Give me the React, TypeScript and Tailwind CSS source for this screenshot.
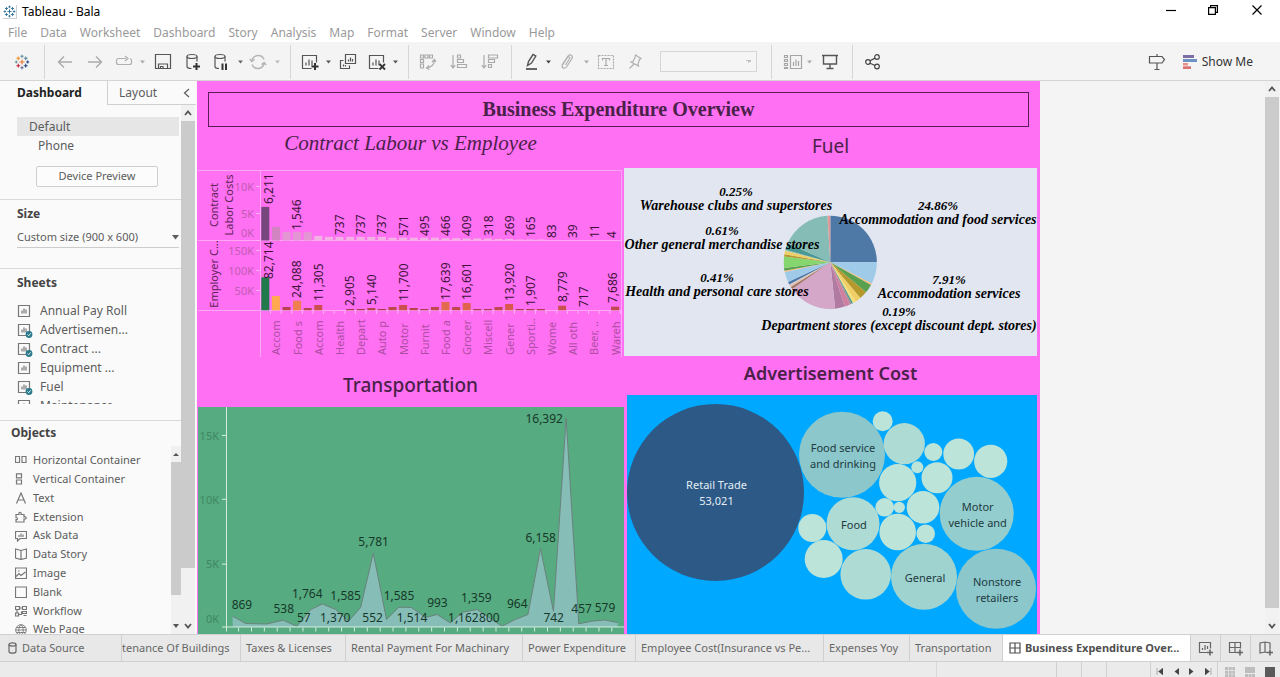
import React from "react";

const SANS = "font-['Noto_Sans','Open_Sans',sans-serif]";

/* ---------- small shared pieces ---------- */

function Icon({ children, w = 18, h = 18, className = "" }: { children: React.ReactNode; w?: number; h?: number; className?: string }) {
  return (
    <svg width={w} height={h} viewBox={`0 0 ${w} ${h}`} fill="none" stroke="currentColor" strokeWidth="1.2" aria-hidden="true" className={`shrink-0 ${className}`}>
      {children}
    </svg>
  );
}

function Tool({ label, className, children }: { label: string; className: string; children: React.ReactNode }) {
  return (
    <button type="button" aria-label={label} className={`flex h-8 shrink-0 items-center justify-center ${className}`}>
      {children}
    </button>
  );
}

function Caret({ label, className = "w-2 text-[#666]" }: { label: string; className?: string }) {
  return (
    <Tool label={label} className={className}>
      <Icon w={5} h={4}>
        <path d="M0 .5h5L2.500 3.500z" fill="currentColor" stroke="none" />
      </Icon>
    </Tool>
  );
}

function Divider({ className }: { className: string }) {
  return <span className={`h-[34px] w-px shrink-0 bg-[#d6d6d6] ${className}`} />;
}

const CROSSES: [number, number, number, string][] = [
  [8, 8, 2.6, "#e8762d"], [8, 2.3, 1.5, "#5b879b"], [8, 13.7, 1.5, "#5b6591"], [2.300, 8, 1.5, "#7099a6"], [13.7, 8, 1.5, "#1f447e"],
  [4.300, 4.300, 1.9, "#eb9129"], [11.700, 4.300, 1.9, "#59879b"], [4.300, 11.700, 1.9, "#c72035"], [11.700, 11.700, 1.9, "#1f447e"],
];

function TableauMark({ size, mono = false }: { size: number; mono?: boolean }) {
  return (
    <svg width={size} height={size} viewBox="0 0 16 16" aria-hidden="true" className="shrink-0">
      {CROSSES.map(([x, y, r, c], i) => (
        <path key={i} d={`M${x - r} ${y}h${2 * r}M${x} ${y - r}v${2 * r}`} stroke={mono ? "#2f7096" : c} strokeWidth="1.1" />
      ))}
    </svg>
  );
}

function ChartGlyph({ extra }: { extra?: React.ReactNode }) {
  return (
    <Icon>
      <path d="M10.500 15.500H1.500v-13h14v7M5 12.500v-3M8 12.500V6.500M11 12.500v-5" />
      {extra}
    </Icon>
  );
}

/* ---------- header ---------- */

const MENUS = ["File", "Data", "Worksheet", "Dashboard", "Story", "Analysis", "Map", "Format", "Server", "Window", "Help"];

function TitleBar() {
  return (
    <div className="flex h-6 shrink-0 items-center bg-white pl-[3px]">
      <span className="flex size-[14px] items-center justify-center border-r border-b border-[#c8d0d4]">
        <TableauMark size={13} mono />
      </span>
      <span className="ml-[5px] text-[12px] text-black">Tableau - Bala</span>
      <div className="ml-auto flex h-full items-start text-black">
        <button type="button" aria-label="Minimize" className="flex h-5 w-[43px] items-center justify-center">
          <Icon w={10} h={10}><path d="M0 5.500h10" /></Icon>
        </button>
        <button type="button" aria-label="Restore" className="flex h-5 w-[42px] items-center justify-center">
          <Icon w={10} h={10}><path d="M.6 2.600h6.800v6.800H.6zM2.600 2.600V.6h6.800v6.800H7.400" /></Icon>
        </button>
        <button type="button" aria-label="Close" className="flex h-5 w-[46px] items-center justify-center">
          <Icon w={10} h={10}><path d="M.5.5l9 9M9.500.5l-9 9" /></Icon>
        </button>
      </div>
    </div>
  );
}

function MenuBar() {
  return (
    <nav className="flex h-[18px] shrink-0 items-center gap-[13px] bg-white pl-2 text-[12px] text-[#999]">
      {MENUS.map((m) => (
        <button key={m} type="button">{m}</button>
      ))}
    </nav>
  );
}

function Toolbar() {
  return (
    <div className="flex h-[39px] shrink-0 items-center border-b border-[#d4d4d4] bg-[#f4f4f4] pt-px text-[#555]">
      <Tool label="Start page" className="w-11"><TableauMark size={16} /></Tool>
      <Divider className="mr-[5px]" />
      <Tool label="Undo" className="w-[30px] text-[#aaa]"><Icon><path d="M16 9H2.500M8 3.500L2.500 9 8 14.500" strokeWidth="1.4" /></Icon></Tool>
      <Tool label="Redo" className="w-[30px] text-[#aaa]"><Icon><path d="M2 9h13.500M10 3.500L15.500 9 10 14.500" strokeWidth="1.4" /></Icon></Tool>
      <Tool label="Replay" className="w-7 text-[#b0b0b0]">
        <Icon><path d="M11 5.500H3.500a2 2 0 0 0-2 2v2a2 2 0 0 0 2 2h11a2 2 0 0 0 2-2v-2a2 2 0 0 0-1.500-2M10 3l3 2.500L10 8" /></Icon>
      </Tool>
      <Caret label="Replay options" className="w-2 text-[#aaa]" />
      <Tool label="Save" className="w-[34px]">
        <Icon><path d="M1.500 1.500h15v14h-15zM4.500 15.500v-4.500h9v4.500M6.500 15.500v-2h2.500v2" /></Icon>
      </Tool>
      <Tool label="New data source" className="w-[26px]">
        <Icon>
          <ellipse cx="8" cy="3.500" rx="5" ry="2" />
          <path d="M3 3.500v10c0 1.200 2 2 4.500 2M13 3.500v5" />
          <path d="M12.500 10v7M9 13.500h7" strokeWidth="2" stroke="#333" />
        </Icon>
      </Tool>
      <Tool label="Pause auto updates" className="w-[30px]">
        <Icon>
          <ellipse cx="8" cy="3.500" rx="5" ry="2" />
          <path d="M3 3.500v10c0 1.200 2 2 4 2M13 3.500v5" />
          <path d="M10.500 10.500v6.500M14 10.500v6.500" strokeWidth="2" stroke="#333" />
        </Icon>
      </Tool>
      <Caret label="Auto update options" />
      <Tool label="Run update" className="w-7 text-[#b5b5b5]">
        <Icon><path d="M3 7.500a6.300 6.300 0 0 1 12-1M15 10.500a6.300 6.300 0 0 1-12 1M.8 6l2 2.500L5.500 6.500M17.200 12l-2-2.500-2.700 2" strokeWidth="1.400" /></Icon>
      </Tool>
      <Caret label="Run update options" className="w-[10px] text-[#bbb]" />
      <Divider className="mr-[5px] ml-2" />
      <Tool label="New worksheet" className="w-[27px]">
        <ChartGlyph extra={<path d="M14 10v7M10.500 13.500h7" strokeWidth="2" stroke="#333" />} />
      </Tool>
      <Caret label="New worksheet options" className="w-[10px] text-[#555]" />
      <Tool label="Duplicate" className="w-[29px]">
        <Icon><path d="M6.500 1.500h10v9h-10zM9.500 8.500v-2M11.500 8.500v-4M13.500 8.500V6M4.500 7.500h-3v8h9v-3M4.500 13.500v-2M6.500 13.500V12" /></Icon>
      </Tool>
      <Tool label="Clear sheet" className="w-[29px]">
        <ChartGlyph extra={<path d="M11.500 11l5.500 5.500M17 11l-5.500 5.500" strokeWidth="1.800" stroke="#333" />} />
      </Tool>
      <Caret label="Clear options" className="w-[9px] text-[#555]" />
      <Divider className="mr-1 ml-2" />
      <Tool label="Swap rows and columns" className="w-[30px] text-[#aaa]">
        <Icon><path d="M1.500 2h3v3h-3zM6 2h3v3H6zM10.500 2h3v3h-3zM1.500 6.500h3v3h-3zM1.500 11h3v4h-3zM15.500 7c0 5-3 7-8 8M13 9l2.500-2.500L17 9M10 12.500L7.500 15l3 1.500" /></Icon>
      </Tool>
      <Tool label="Sort ascending" className="w-8 text-[#aaa]">
        <Icon><path d="M3 2v12.500M.8 12L3 15l2.200-3M7.500 2h3v3h-3zM7.500 6.500h6v3h-6zM7.500 11.500h9v3h-9z" /></Icon>
      </Tool>
      <Tool label="Sort descending" className="w-[30px] text-[#aaa]">
        <Icon><path d="M3 2v12.500M.8 12L3 15l2.200-3M7.500 2h9v3h-9zM7.500 6.500h6v3h-6zM7.500 11.500h3v3h-3z" /></Icon>
      </Tool>
      <Divider className="mr-2 ml-[6px]" />
      <Tool label="Highlight" className="w-6">
        <Icon>
          <path d="M4.500 12.500l1-4L10 1.500l2.800 1.600-4.300 7z" strokeWidth="1.400" />
          <path d="M3 16h11" strokeWidth="1.800" />
        </Icon>
      </Tool>
      <Caret label="Highlight options" className="w-2 text-[#444]" />
      <Tool label="Group members" className="w-[30px] text-[#b0b0b0]">
        <Icon><path d="M4 12l6-9c2-2.500 5.500-.5 4 2.500l-5.500 8.500c-2 2.500-5.500.5-4-2l5-7.500c1-1.500 3-.2 2.200 1L7.500 12" /></Icon>
      </Tool>
      <Caret label="Group options" className="w-2 text-[#aaa]" />
      <Tool label="Show mark labels" className="w-8 text-[#aaa]">
        <Icon>
          <path d="M1.500 2.500h15v13h-15z" strokeDasharray="2 1" />
          <path d="M5.500 7.500v-2h7v2M9 5.500v7M7 12.500h4" />
        </Icon>
      </Tool>
      <Tool label="Fix axes" className="w-[26px] text-[#b0b0b0]">
        <Icon><path d="M9.500 2l5.500 3.500-1.500 1-1.500 4.500.5 2L5 9l2-.5L9 4.500zM8 11l-4.500 4.500" /></Icon>
      </Tool>
      <select aria-label="Fit" className="mr-[14px] ml-3 h-[21px] w-[97px] shrink-0 appearance-none border border-[#d5d5d5] bg-[#f5f5f5] bg-[linear-gradient(45deg,transparent_50%,#c4c4c4_50%),linear-gradient(-45deg,transparent_50%,#c4c4c4_50%)] bg-[position:85px_8px,88px_8px] bg-[size:3px_3px] bg-no-repeat" defaultValue="">
        <option value=""></option>
      </select>
      <Divider className="mr-2" />
      <Tool label="Show or hide cards" className="w-[25px] text-[#a5a5a5]">
        <Icon w={20}><path d="M7.500 2.500h11v13h-11zM10.500 13V9M13 13V6.500M15.500 13V8M1.500 2.500h3v2h-3zM1.500 6.500h3v2h-3zM1.500 10.500h3v2h-3zM1.500 14.500h3v1h-3z" /></Icon>
      </Tool>
      <Caret label="Card options" className="w-2 text-[#aaa]" />
      <Tool label="Presentation mode" className="w-[33px]">
        <Icon><path d="M1 2.500h16M2.500 2.500v8.500h13V2.500M9 11v4.500M5.500 15.500h7" strokeWidth="1.400" /></Icon>
      </Tool>
      <Divider className="mr-[6px] ml-[6px]" />
      <Tool label="Share" className="w-7 text-[#444]">
        <Icon>
          <circle cx="4" cy="9" r="2.300" /><circle cx="13" cy="4" r="2.300" /><circle cx="13" cy="13.500" r="2.300" />
          <path d="M6 7.800l5-2.700M6 10.200l5 2.300" />
        </Icon>
      </Tool>
      <div className="ml-auto flex items-center pr-[27px]">
        <Tool label="Tour" className="mr-4 w-5">
          <Icon><path d="M1.500 3.500H14l2.500 3L14 10H1.500zM9 1v2.500M9 10v6.500M6.500 16.500h5" /></Icon>
        </Tool>
        <button type="button" className="flex items-center gap-[5px] text-[12px] text-[#333]">
          <svg width="14" height="14" viewBox="0 0 14 14" aria-hidden="true">
            <path d="M0 0h11v3H0z" fill="#7b6fa6" /><path d="M0 4h14v3H0z" fill="#6d93c4" />
            <path d="M0 8h5v2.500H0z" fill="#e8908a" /><path d="M0 11.300h8V14H0z" fill="#d97272" />
          </svg>
          Show Me
        </button>
      </div>
    </div>
  );
}

/* ---------- scroll bars ---------- */

function Arrow({ up, solid = false }: { up: boolean; solid?: boolean }) {
  return (
    <Icon w={8} h={6} className="text-[#555]">
      {solid ? (
        <path d={up ? "M1 5h6L4 2z" : "M1 1h6L4 5z"} fill="currentColor" stroke="none" />
      ) : (
        <path d={up ? "M1 5l3-3.500L7 5" : "M1 1l3 3.500L7 1"} strokeWidth="1.800" />
      )}
    </Icon>
  );
}

function ScrollBar({ className, thumb, solid }: { className: string; thumb: string; solid?: boolean }) {
  return (
    <div className={`flex shrink-0 flex-col items-center bg-[#f1f1f1] ${className}`} aria-hidden="true">
      <span className="flex h-4 items-center"><Arrow up solid={solid} /></span>
      <div className="flex w-full flex-1 flex-col"><span className={`w-full bg-[#cbcbcb] ${thumb}`} /></div>
      <span className="flex h-4 items-center"><Arrow up={false} solid={solid} /></span>
    </div>
  );
}

/* ---------- sidebar ---------- */

const SHEETS = [
  { name: "Annual Pay Roll", used: false },
  { name: "Advertisemen...", used: true },
  { name: "Contract ...", used: true },
  { name: "Equipment ...", used: false },
  { name: "Fuel", used: true },
  { name: "Maintenance ...", used: false },
];

const OBJECTS: { name: string; icon: React.ReactNode }[] = [
  { name: "Horizontal Container", icon: <path d="M.5 2.500h4v6h-4zM7 2.500h4v6H7z" /> },
  { name: "Vertical Container", icon: <path d="M1.500 .8h5v4h-5zM1.500 7h5v4h-5z" /> },
  { name: "Text", icon: <path d="M1.500 11.500L6 1l4.500 10.500M3 8h6" /> },
  { name: "Extension", icon: <path d="M1 3.500h3c-1-3 3-3 2 0h3v2.500c3-1 3 2.500 0 2v3H1V8.500c2 .5 2-2 0-2z" /> },
  { name: "Ask Data", icon: <path d="M.5 1.500h11v7H5l-2.500 2.500V8.500h-2zM4 7V5M6 7V3.500M8 7V4.500" /> },
  { name: "Data Story", icon: <path d="M6 2.500L.5 1v9L6 11.500 11.500 10V1zM6 2.500v9" /> },
  { name: "Image", icon: <path d="M.5 1h11v10.500H.5zM1 9.500l3-3 2 2 4.500-3.500M3 4h1.500" /> },
  { name: "Blank", icon: <path d="M.5 1h11v10.500H.5z" /> },
  { name: "Workflow", icon: <path d="M.5 1.500h4v3h-4zM7.500 1.500h4v3h-4zM.5 8h3v3h-3zM7.500 6.500h4v2h-4zM4.500 3h3M3.500 9.500h3v-3M2 4.500V8M8.500 10.500h3" /> },
  { name: "Web Page", icon: <path d="M6 .7a5.300 5.300 0 1 0 0 10.600A5.300 5.300 0 0 0 6 .7zM6 .7c-3 3-3 7.600 0 10.600 3-3 3-7.600 0-10.600zM.7 6h10.600M1.500 3.500h9M1.500 8.500h9" strokeWidth=".9" /> },
];

function SheetIcon({ used }: { used: boolean }) {
  return (
    <Icon w={16} h={16} className="text-[#777]">
      <path d="M1.500 2.500h11v11h-11z" />
      <path d="M5 10.500v-3M7 10.500V5.500M9 10.500V6.500" />
      {used && (
        <>
          <circle cx="12" cy="12.500" r="3.400" fill="#2b7a8c" stroke="none" />
          <path d="M10.500 12.500l1.200 1.200 2-2.400" stroke="#fff" strokeWidth=".9" />
        </>
      )}
    </Icon>
  );
}

function Sidebar() {
  return (
    <aside className="flex w-[196px] shrink-0 flex-col bg-[#fafafa] text-[12px] text-[#5c5c5c]">
      <div className="flex h-6 shrink-0">
        <button type="button" className="w-[107px] pl-[17px] text-left font-bold text-[#222]">Dashboard</button>
        <div className="flex flex-1 items-center justify-between border-b border-l border-[#d0d0d0] pr-[6px] pl-[11px]">
          <button type="button">Layout</button>
          <button type="button" aria-label="Collapse pane"><Icon w={7} h={10}><path d="M6 1L1.500 5 6 9" /></Icon></button>
        </div>
      </div>
      <div className="flex min-h-0 flex-1">
        <div className="flex min-w-0 flex-1 flex-col">
          <section className="h-[95px] shrink-0 border-b border-[#d8d8d8] pt-3 pr-[2px] pl-[17px]">
            <button type="button" className="block h-[19px] w-full bg-[#e6e6e6] pl-3 text-left">Default</button>
            <button type="button" className="block h-[19px] pl-[21px]">Phone</button>
            <button type="button" className="mt-[11px] ml-[19px] h-[21px] w-[122px] rounded-[2px] border border-[#cfcfcf] bg-[#fcfcfc] text-[11px]">Device Preview</button>
          </section>
          <section className="h-[69px] shrink-0 border-b border-[#d8d8d8] pt-[5px] pr-[2px] pl-[17px]">
            <h2 className="h-[19px] font-bold text-[#444]">Size</h2>
            <div className="mt-1 flex h-5 items-center border-b border-[#ccc]">
              <select aria-label="Size" className="min-w-0 flex-1 appearance-none bg-transparent text-[11px]">
                <option>Custom size (900 x 600)</option>
              </select>
              <Icon w={7} h={5}><path d="M0 0h7L3.500 4.500z" fill="currentColor" stroke="none" /></Icon>
            </div>
          </section>
          <section className="flex h-[152px] shrink-0 flex-col border-b border-[#d8d8d8] pt-[5px] pl-[17px]">
            <h2 className="h-[19px] font-bold text-[#444]">Sheets</h2>
            <ul className="mt-2 h-[103px] overflow-hidden">
              {SHEETS.map((s) => (
                <li key={s.name} className="flex h-[19px] items-center gap-[7px]">
                  <SheetIcon used={s.used} />
                  {s.name}
                </li>
              ))}
            </ul>
          </section>
          <section className="flex min-h-0 flex-1 flex-col pt-[3px] pl-[11px]">
            <h2 className="h-[22px] shrink-0 font-bold text-[#444]">Objects</h2>
            <div className="flex min-h-0 flex-1 overflow-hidden">
              <ul className="grid h-[193px] flex-1 auto-rows-fr pt-[5px] pl-1 text-[11px]">
                {OBJECTS.map((o) => (
                  <li key={o.name} className="flex items-center gap-[6px]">
                    <Icon w={12} h={12} className="text-[#777]">{o.icon}</Icon>
                    <span className="whitespace-nowrap">{o.name}</span>
                  </li>
                ))}
              </ul>
              <ScrollBar className="w-[10px]" thumb="h-[85%]" solid />
            </div>
          </section>
        </div>
        <ScrollBar className="mr-px w-[14px]" thumb="h-[90%]" />
      </div>
    </aside>
  );
}

/* ---------- contract labour / employer cost bars ---------- */

const PITCH = 10.6;
const barX = (i: number) => 265.3 + i * PITCH;

const LABOUR_HEIGHTS = [33.600, 13.600, 8.600, 8.300, 8.300, 4.600, 3.600, 3.600, 3.600, 3.600, 3.600, 3.600, 2.800, 2.800, 2.800, 2.800, 2.800, 2.300, 2.300, 2, 2, 2, 1.600, 1.600, 1, 1, 1, 0, 0, 0, 0, 0, 0, 0];
const LABOUR_LABELS: [number, number, string][] = [
  [268, 204, "6,211"], [296.7, 230, "1,546"], [339.5, 235, "737"], [360.7, 235, "737"], [381.900, 235, "737"], [403, 236, "571"],
  [424.300, 236, "495"], [445.500, 236, "466"], [466.700, 236, "409"], [488, 236, "318"], [509.100, 236, "269"], [530.300, 237, "165"],
  [551.500, 238, "83"], [572.700, 238, "39"], [594, 238, "11"], [611.500, 238, "4"],
];
const EMPLOYER_BARS: [number, number, string][] = [
  [0, 33, "#217a4b"], [1, 14.300, "#ffa84f"], [2, 3.300, "#b8434f"], [3, 9.600, "#f07f50"], [4, 2.300, "#b8434f"], [5, 5.300, "#cc4f50"],
  [8, 1.300, "#b03a55"], [9, 1.300, "#b03a55"], [10, 2.300, "#b8434f"], [11, 1.300, "#b03a55"], [12, 3.300, "#c04650"], [13, 5.300, "#cc4f50"],
  [14, 2.300, "#b8434f"], [15, 1.300, "#b03a55"], [16, 3.300, "#c04650"], [17, 8.300, "#e46a4d"], [18, 3.300, "#c04650"], [19, 7.300, "#e0634d"],
  [20, 1.300, "#b03a55"], [21, 1.300, "#b03a55"], [22, 3.300, "#c04650"], [23, 6.300, "#d9594e"], [24, 1.300, "#b03a55"], [25, 1.300, "#b03a55"],
  [26, 1.300, "#b03a55"], [28, 4.600, "#cc4f50"], [33, 3.600, "#c04650"],
];
const EMPLOYER_LABELS: [number, number, string][] = [
  [268.500, 279, "82,714"], [296.900, 298, "24,088"], [318.500, 301, "11,305"], [349.500, 306, "2,905"], [371, 305, "5,140"], [403, 301, "11,700"],
  [445.500, 300, "17,639"], [466.700, 300, "16,601"], [509.100, 301, "13,920"], [530.300, 306, "1,907"], [562.500, 302, "8,779"],
  [583, 307, "717"], [612, 303, "7,686"],
];
const CATEGORIES = ["Accom", "Food s", "Accom", "Health", "Depart", "Auto p", "Motor", "Furnit", "Food a", "Grocer", "Miscell", "Gener", "Sporti..", "Wome", "All oth", "Beer, ..", "Wareh"];

function Vertical({ x, y, children, anchor = "start", className = "" }: { x: number; y: number; children: React.ReactNode; anchor?: "start" | "middle"; className?: string }) {
  return (
    <text transform={`translate(${x} ${y}) rotate(-90)`} textAnchor={anchor} dominantBaseline="central" className={className}>
      {children}
    </text>
  );
}

function LabourChart() {
  return (
    <svg viewBox="197 170 427 187" className="block h-auto w-full" role="img" aria-label="Contract labour costs and employer costs by category">
      <path d="M198 170.500H621.500M198 240.500H621.500M198 310.500H621.500M260.500 170V357M621.500 170V357" stroke="#ffa6f5" fill="none" />
      <path d="M256 186.500h4M256 213.500h4M256 240.500h4M256 250.500h4M256 270.500h4M256 290.500h4" stroke="#ffb2f6" />
      {LABOUR_HEIGHTS.map((h, i) => (
        <rect key={i} x={barX(i) - 4} y={240.500 - h} width="8" height={h} fill={i === 0 ? "#75477d" : i === 1 ? "#d184c0" : i < 5 ? "#e397d2" : "#f3b2e4"} />
      ))}
      {EMPLOYER_BARS.map(([i, h, c]) => (
        <rect key={i} x={barX(i) - 4} y={310.300 - h} width="8" height={h} fill={c} />
      ))}
      {LABOUR_HEIGHTS.map((_, i) => (
        <path key={i} d={`M${barX(i) + 5.300} 311v3`} stroke="#ffb2f6" />
      ))}
      <g className="fill-[#c05cb4] text-[11px]" textAnchor="end">
        <text x="254" y="191">10K</text><text x="254" y="218">5K</text><text x="254" y="237">0K</text>
        <text x="254" y="255">150K</text><text x="254" y="275">100K</text><text x="254" y="295">50K</text>
      </g>
      <g className="fill-[#5b2458] text-[11px]">
        <Vertical x={213} y={205} anchor="middle">Contract</Vertical>
        <Vertical x={228} y={205} anchor="middle">Labor Costs</Vertical>
        <Vertical x={213} y={274} anchor="middle">Employer C...</Vertical>
      </g>
      <g className="fill-[#3d133b] text-[12px]">
        {LABOUR_LABELS.concat(EMPLOYER_LABELS).map(([x, y, t], i) => (
          <Vertical key={i} x={x} y={y}>{t}</Vertical>
        ))}
      </g>
      <g className="fill-[#ac4ea3] text-[11px]">
        {CATEGORIES.map((c, i) => (
          <Vertical key={i} x={barX(2 * i + 1)} y={355}>{c}</Vertical>
        ))}
      </g>
    </svg>
  );
}

/* ---------- fuel pie ---------- */

const SLICES: [number, number, string][] = [
  [0, 90, "#4e79a7"], [90, 117, "#a0cbe8"], [117, 119, "#ffbe7d"], [119, 130, "#59a14f"], [130, 140, "#b6992d"], [140, 147, "#f1ce63"],
  [147, 151, "#f3e07b"], [151, 153, "#499894"], [153, 155, "#a08a90"], [155, 162, "#cf7fa0"], [162, 174, "#b07aa1"], [174, 235, "#d4a6c8"], [235, 238, "#9d7660"],
  [238, 240, "#e4b8a8"], [240, 241.500, "#d8cfc8"], [241.500, 245, "#4e79a7"], [245, 258, "#a0cbe8"], [258, 259.500, "#ffbe7d"], [259.500, 263, "#59a14f"], [263, 277, "#86d66f"],
  [277, 280, "#b6992d"], [280, 284, "#f1ce63"], [284, 285.500, "#b7cf9c"], [285.500, 294, "#499894"], [294, 356.500, "#86bcb6"], [356.500, 360, "#e19b98"],
];
const PIE_LABELS: [number, number, string, string][] = [
  [736, 196, "0.25%", "Warehouse clubs and superstores"],
  [938, 210, "24.86%", "Accommodation and food services"],
  [722, 235, "0.61%", "Other general merchandise stores"],
  [717, 282, "0.41%", "Health and personal care stores"],
  [949, 284, "7.91%", "Accommodation services"],
  [899, 316, "0.19%", "Department stores (except discount dept. stores)"],
];

function slicePath(from: number, to: number) {
  const point = (deg: number) => {
    const a = (deg * Math.PI) / 180;
    return `${830.3 + 46.6 * Math.sin(a)} ${262.3 - 46.6 * Math.cos(a)}`;
  };
  return `M830.3 262.3L${point(from)}A46.6 46.6 0 0 1 ${point(to)}Z`;
}

function FuelPie() {
  return (
    <svg viewBox="624 168 413 188" className="block h-auto w-full bg-[#e1e6f1]" role="img" aria-label="Fuel share by category">
      {SLICES.map(([a, b, c]) => (
        <path key={a} d={slicePath(a, b)} fill={c} />
      ))}
      <g textAnchor="middle" className="fill-black font-['Liberation_Serif',serif] font-bold italic">
        {PIE_LABELS.map(([x, y, pct, name]) => (
          <React.Fragment key={name}>
            <text x={x} y={y} className="text-[13px]">{pct}</text>
            <text x={x} y={y + 14} className="text-[14px]">{name}</text>
          </React.Fragment>
        ))}
      </g>
    </svg>
  );
}

/* ---------- transportation area ---------- */

const AREA =
  "232.7,616.7 245.7,624 267,624.5 283.3,620.7 297,626.7 311,610 322.7,604.5 336,610 349,621.5 361,608 373.7,553.5 387,620 399.3,607.7 412,608 426,618 437.7,615 451,623.5 463,612.7 477.7,610 489.5,618 502.7,626.7 516,620 528.7,615 541.3,549 554.3,611.7 567,418 579.7,624.3 592.7,621.7 605.3,620.5 618.7,623";
const AREA_LABELS: [number, number, string][] = [
  [242, 609, "869"], [284, 614, "538"], [307.500, 598, "1,764"], [304, 623, "57"], [335.500, 623, "1,370"], [346, 600, "1,585"],
  [374, 546, "5,781"], [373, 623, "552"], [399.500, 600, "1,585"], [412.500, 623, "1,514"], [438, 607, "993"], [464, 623, "1,162"],
  [477, 602, "1,359"], [490, 623, "800"], [518, 608, "964"], [541.500, 542, "6,158"], [554.500, 623, "742"], [545, 423, "16,392"],
  [582.500, 614, "457"], [606, 613, "579"],
];

function TransportChart() {
  return (
    <svg viewBox="198 407 427 228" className="block h-auto w-full" role="img" aria-label="Transportation cost by category">
      <polygon points={`232.700,627.500 ${AREA} 618.700,627.500`} fill="#86bdb7" />
      <polyline points={AREA} fill="none" stroke="#6a827c" />
      <path d="M226.500 407V632M222 627.500H625M222 435.500h4M222 499.500h4M222 564.500h4" stroke="#d7efe3" fill="none" />
      {Array.from({ length: 30 }, (_, i) => (
        <path key={i} d={`M${238.700 + i * 12.900} 628v4`} stroke="#d7efe3" />
      ))}
      <g textAnchor="end" className="fill-[#3f8763] text-[11px]">
        <text x="219" y="440">15K</text><text x="219" y="504">10K</text><text x="219" y="568">5K</text><text x="219" y="624">0K</text>
      </g>
      <g textAnchor="middle" className="fill-[#16382a] text-[12px]">
        {AREA_LABELS.map(([x, y, t], i) => (
          <text key={i} x={x} y={y}>{t}</text>
        ))}
      </g>
    </svg>
  );
}

/* ---------- advertisement bubbles ---------- */

const BUBBLES: [number, number, number, string, string[]?][] = [
  [715.500, 492.400, 88.500, "#2c5985", ["Retail Trade", "53,021"]],
  [842, 454.800, 43, "#8bc7cb", ["Food service", "and drinking"]],
  [882.700, 421.300, 10, "#bce4d8"], [904.300, 443.700, 20.600, "#aedbd3"], [933.300, 452, 9, "#bce4d8"], [958.700, 454, 15.400, "#bce4d8"],
  [990.700, 461.300, 16.600, "#bce4d8"], [917.300, 467.300, 6, "#bce4d8"], [897.700, 482.700, 18.600, "#bce4d8"], [937, 477.700, 15.500, "#bce4d8"],
  [976.700, 513.700, 37, "#94cdcd", ["Motor", "vehicle and"]],
  [884.700, 507.300, 9.300, "#bce4d8"], [899.300, 507.300, 5.600, "#bce4d8"], [923, 507.300, 16.300, "#bce4d8"], [897.700, 532, 18.300, "#bce4d8"],
  [925.700, 533.700, 9.300, "#bce4d8"],
  [853, 523.700, 26.500, "#aedbd3", ["Food"]],
  [812.300, 528, 14, "#bce4d8"], [823.700, 559, 19, "#bce4d8"], [865.700, 574.300, 25.300, "#aedbd3"],
  [924, 576.700, 33, "#9fd3d0", ["General"]],
  [996, 588.700, 40, "#8bc7cb", ["Nonstore", "retailers"]],
];

function BubbleChart() {
  return (
    <svg viewBox="627 395 410 240" className="block h-auto w-full" role="img" aria-label="Advertisement cost by industry">
      {BUBBLES.map(([x, y, r, c, lines], i) => (
        <g key={i}>
          <circle cx={x} cy={y} r={r} fill={c} />
          {lines?.map((line, n) => (
            <text key={line} x={x + 1} y={y + 5 + (n - (lines.length - 1) / 2) * 16} textAnchor="middle" className={i === 0 ? "fill-[#e4edf5] text-[11px]" : "fill-[#223a3e] text-[11px]"}>
              {line}
            </text>
          ))}
        </g>
      ))}
    </svg>
  );
}

/* ---------- dashboard canvas ---------- */

function Dashboard() {
  return (
    <main className="ml-px flex min-w-0 flex-[843_1_0%] flex-col overflow-hidden bg-[#ff70f2] text-[#4a2148]">
      <h1 className="mx-[11px] mt-[11px] flex h-[35px] shrink-0 items-center justify-center border border-[#5b1d57] pb-[2px] font-['Liberation_Serif',serif] text-[20px] font-bold">
        Business Expenditure Overview
      </h1>
      <div className="flex min-h-0 flex-1">
        <div className="flex min-w-0 flex-[427_1_0%] flex-col">
          <h2 className="h-[43px] shrink-0 pt-[2px] text-center font-['Liberation_Serif',serif] text-[21px] leading-7 italic">Contract Labour vs Employee</h2>
          <div className="shrink-0"><LabourChart /></div>
          <h2 className="flex h-[50px] shrink-0 items-center justify-center pt-[6px] text-[19px] font-medium">Transportation</h2>
          <div className="ml-px min-h-0 flex-1 overflow-hidden bg-[#56ab80]"><TransportChart /></div>
        </div>
        <div className="mr-[3px] flex min-w-0 flex-[413_1_0%] flex-col">
          <h2 className="flex h-[41px] shrink-0 items-center justify-center pb-[2px] text-[19px]">Fuel</h2>
          <div className="shrink-0"><FuelPie /></div>
          <h2 className="flex h-[39px] shrink-0 items-center justify-center pb-1 text-[18px] font-semibold">Advertisement Cost</h2>
          <div className="ml-[3px] min-h-0 flex-1 overflow-hidden bg-[#00a8ff]"><BubbleChart /></div>
        </div>
      </div>
    </main>
  );
}

/* ---------- bottom bars ---------- */

const SHEET_TABS = [
  { name: "Taxes & Licenses", width: "w-[105px]" },
  { name: "Rental Payment For Machinary", width: "w-[177px]" },
  { name: "Power Expenditure", width: "w-[113px]" },
  { name: "Employee Cost(Insurance vs Pe...", width: "w-[188px]" },
  { name: "Expenses Yoy", width: "w-[86px]" },
  { name: "Transportation", width: "w-[93px]" },
];

function SheetTabs() {
  return (
    <div className="flex h-7 shrink-0 border-y border-[#d0d0d0] bg-[#e8e8e8] text-[11px] text-[#666]">
      <button type="button" className="flex w-[121px] shrink-0 items-center gap-[5px] pl-2">
        <Icon w={9} h={12}><ellipse cx="4.500" cy="2.500" rx="3.500" ry="1.600" /><path d="M1 2.500v7c0 1 1.500 1.700 3.500 1.700S8 10.500 8 9.500v-7" /></Icon>
        Data Source
      </button>
      <button type="button" className="w-[120px] shrink-0 border-x border-[#d0d0d0] text-left whitespace-nowrap">
        tenance Of Buildings
      </button>
      {SHEET_TABS.map((t) => (
        <button key={t.name} type="button" className={`shrink-0 border-r border-[#d0d0d0] pl-[5px] text-left whitespace-nowrap ${t.width}`}>
          {t.name}
        </button>
      ))}
      <button type="button" className="flex min-w-[180px] flex-1 items-center gap-1 bg-white pl-[6px] font-bold whitespace-nowrap text-[#505050]">
        <Icon w={12} h={12}><path d="M1 1h10v10H1zM6 1v10M1 6h10" /></Icon>
        Business Expenditure Over...
      </button>
      <div className="flex shrink-0">
        <Tool label="New worksheet tab" className="h-full w-[30px] border-l border-[#d0d0d0]">
          <Icon w={16} h={16}><path d="M9 12.500H1.500v-10h11v6M4.500 10V8M7 10V5M9.500 9V6" /><path d="M12 9.500v6M9 12.500h6" strokeWidth="1.600" /></Icon>
        </Tool>
        <Tool label="New dashboard tab" className="h-full w-[30px] border-l border-[#d0d0d0]">
          <Icon w={16} h={16}><path d="M9 12.500H1.500v-10h11v6M7 2.500v10M1.500 7.500h11" /><path d="M12 9.500v6M9 12.500h6" strokeWidth="1.600" /></Icon>
        </Tool>
        <Tool label="New story tab" className="h-full w-[30px] border-l border-[#d0d0d0]">
          <Icon w={16} h={16}><path d="M9 12.500l-2-.5-5 1V3l5-1 5 1v6M7 2v10" /><path d="M12 9.500v6M9 12.500h6" strokeWidth="1.600" /></Icon>
        </Tool>
      </div>
    </div>
  );
}

function StatusBar() {
  return (
    <div className="flex h-[15px] shrink-0 items-stretch justify-end bg-[#ebebeb] text-[#444]">
      <span className="w-[120px] border-l border-[#d8d8d8]" />
      <span className="w-[25px] border-l border-[#d0d0d0]" />
      <span className="w-[25px] border-l border-[#d0d0d0]" />
      <span className="w-[44px] border-l border-[#d0d0d0]" />
      <div className="flex w-[67px] items-center justify-around border-l border-[#d0d0d0] pt-[3px]">
        <button type="button" aria-label="First sheet"><Icon w={7} h={7}><path d="M1 0v7M7 0v7L2.500 3.500z" fill="currentColor" strokeWidth=".4" /></Icon></button>
        <button type="button" aria-label="Previous sheet"><Icon w={5} h={7}><path d="M5 0v7L.5 3.500z" fill="currentColor" stroke="none" /></Icon></button>
        <button type="button" aria-label="Next sheet"><Icon w={5} h={7}><path d="M0 0v7l4.500-3.500z" fill="currentColor" stroke="none" /></Icon></button>
        <button type="button" aria-label="Last sheet"><Icon w={7} h={7}><path d="M6 0v7M0 0v7l4.500-3.500z" fill="currentColor" strokeWidth=".4" /></Icon></button>
      </div>
      <div className="flex w-[63px] items-center justify-end gap-[10px] overflow-hidden border-l border-[#d0d0d0] pt-1 pr-[5px]">
        <button type="button" aria-label="Show sheet sorter"><Icon w={10} h={10}><path d="M0 0h3v3H0zM3.700 0h3v3h-3zM7.300 0h3v3h-3zM0 3.700h3v3H0zM3.700 3.700h3v3h-3zM7.300 3.700h3v3h-3zM0 7.300h3v3H0zM3.700 7.300h3v3h-3zM7.300 7.300h3v3h-3z" fill="#bdbdbd" stroke="none" /></Icon></button>
        <button type="button" aria-label="Show filmstrip"><Icon w={10} h={10}><path d="M0 0h10v6H0zM0 7h3v3H0zM3.500 7h3v3h-3zM7 7h3v3H7z" fill="#bdbdbd" stroke="none" /></Icon></button>
        <button type="button" aria-label="Show tabs"><Icon w={10} h={10}><path d="M0 0h10v10H0z" fill="#5a5a5a" stroke="none" /></Icon></button>
      </div>
    </div>
  );
}

export default function App() {
  return (
    <div className={`flex h-screen flex-col overflow-hidden bg-[#f4f4f4] ${SANS}`}>
      <TitleBar />
      <MenuBar />
      <Toolbar />
      <div className="flex min-h-0 flex-1">
        <Sidebar />
        <Dashboard />
        <div className="flex-[225_1_0%]" />
        <ScrollBar className="mr-px w-[14px]" thumb="h-[98%]" />
      </div>
      <SheetTabs />
      <StatusBar />
    </div>
  );
}
